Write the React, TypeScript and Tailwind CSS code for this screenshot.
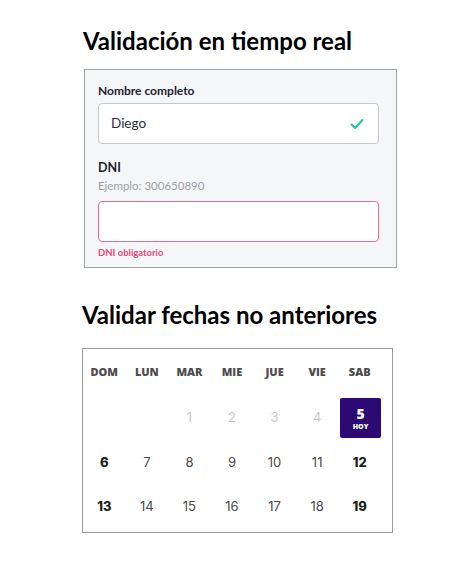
import React from "react";

const days: { n: string; kind: "empty" | "past" | "today" | "bold" | "normal" }[] = [
  { n: "", kind: "empty" },
  { n: "", kind: "empty" },
  { n: "1", kind: "past" },
  { n: "2", kind: "past" },
  { n: "3", kind: "past" },
  { n: "4", kind: "past" },
  { n: "5", kind: "today" },
  { n: "6", kind: "bold" },
  { n: "7", kind: "normal" },
  { n: "8", kind: "normal" },
  { n: "9", kind: "normal" },
  { n: "10", kind: "normal" },
  { n: "11", kind: "normal" },
  { n: "12", kind: "bold" },
  { n: "13", kind: "bold" },
  { n: "14", kind: "normal" },
  { n: "15", kind: "normal" },
  { n: "16", kind: "normal" },
  { n: "17", kind: "normal" },
  { n: "18", kind: "normal" },
  { n: "19", kind: "bold" },
];

const heads = ["DOM", "LUN", "MAR", "MIE", "JUE", "VIE", "SAB"];

export default function App() {
  return (
    <div className="w-[469px] h-[568px] bg-white flex flex-col" style={{ fontFamily: "Lato, 'Noto Sans', sans-serif" }}>
      <h1
        className="ml-[83px] mt-[26px] h-[30px] leading-[30px] text-[24px] font-bold text-black"
        style={{ fontFamily: "Lato, 'Open Sans', sans-serif" }}
      >
        Validación en tiempo real
      </h1>
      <div className="ml-[84px] mt-[13px] w-[313px] h-[199px] border border-[#a3a3a3] bg-[#f5f6f8] pl-[13px] pr-[17px] pt-[13px] flex flex-col">
        <div className="h-[16px] leading-[16px] text-[12px] font-bold text-[#1f2430]">Nombre completo</div>
        <div className="mt-[4px] h-[41px] rounded-[4px] border border-[#c6c8ce] bg-white flex items-center justify-between pl-[12px] pr-[14px]">
          <span className="text-[13.5px] text-[#2b2f3a]">Diego</span>
          <svg width="14" height="12" viewBox="0 0 14 12" fill="none">
            <path d="M1.5 6.5 L5 10 L12.5 2" stroke="#17c9a0" strokeWidth="2" strokeLinecap="round" strokeLinejoin="round" />
          </svg>
        </div>
        <div className="mt-[16px] h-[16px] leading-[16px] text-[12.5px] font-bold text-[#1f2430]">DNI</div>
        <div className="mt-[2px] h-[16px] leading-[16px] text-[11.5px] text-[#9aa0a8]">Ejemplo: 300650890</div>
        <div className="mt-[7px] h-[41px] rounded-[4px] border border-[#f0678f] bg-white"></div>
        <div className="mt-[5px] h-[12px] leading-[12px] text-[9.5px] font-bold text-[#f0467a]">DNI obligatorio</div>
      </div>
      <h2
        className="ml-[82px] mt-[32px] h-[30px] leading-[30px] text-[24px] font-bold text-black"
        style={{ fontFamily: "Lato, 'Open Sans', sans-serif" }}
      >
        Validar fechas no anteriores
      </h2>
      <div className="ml-[82px] mt-[18px] w-[311px] h-[185px] border border-[#9a9a9a] bg-white pr-[11px]">
        <div className="grid grid-cols-7 h-[46px] items-center">
          {heads.map((h) => (
            <div key={h} className="text-center text-[11px] font-extrabold text-[#4d4d4d]" style={{ fontFamily: "'Open Sans', sans-serif" }}>
              {h}
            </div>
          ))}
        </div>
        <div className="grid grid-cols-7 grid-rows-[46px_44px_44px]">
          {days.map((d, i) => {
            if (d.kind === "today") {
              return (
                <div key={i} className="flex items-center justify-end">
                  <div className="w-[41px] h-[40px] rounded-[2px] bg-[#2d0a73] flex flex-col items-center justify-center text-white">
                    <span className="text-[14px] font-extrabold leading-[16px]" style={{ fontFamily: "'Open Sans', sans-serif" }}>5</span>
                    <span className="text-[7px] font-extrabold leading-[9px]" style={{ fontFamily: "'Open Sans', sans-serif" }}>HOY</span>
                  </div>
                </div>
              );
            }
            const cls =
              d.kind === "past"
                ? "text-[#c9c9c9] font-normal"
                : d.kind === "bold"
                ? "text-[#1e1e1e] font-extrabold"
                : "text-[#4a4a4a] font-normal";
            return (
              <div key={i} className={`flex items-center justify-center text-[13px] ${cls}`} style={{ fontFamily: "Inter, sans-serif" }}>
                {d.n}
              </div>
            );
          })}
        </div>
      </div>
    </div>
  );
}
